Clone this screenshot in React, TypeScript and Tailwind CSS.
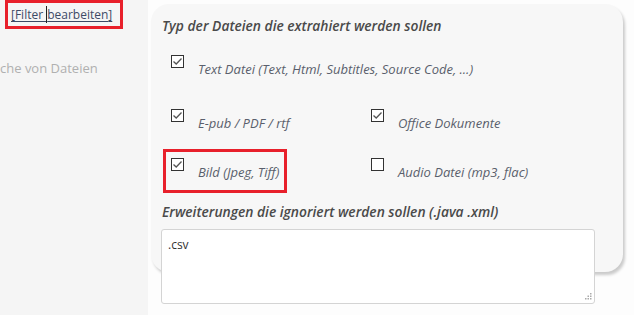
import React from "react"

type Opt = { label: string; checked: boolean; marked?: boolean }

const rows: Opt[][] = [
    [{ label: "Text Datei (Text, Html, Subtitles, Source Code, ...)", checked: true }],
    [
        { label: "E-pub / PDF / rtf", checked: true },
        { label: "Office Dokumente", checked: true },
    ],
    [
        { label: "Bild (Jpeg, Tiff)", checked: true, marked: true },
        { label: "Audio Datei (mp3, flac)", checked: false },
    ],
]

const rowGap = ["mt-0", "mt-[31px]", "mt-[26px]"]

const Box = ({ checked }: { checked: boolean }) => (
    <span className="flex items-center justify-center w-[13px] h-[13px] shrink-0 border border-[#333] bg-white">
        {checked && (
            <svg width="11" height="11" viewBox="0 0 11 11" fill="none">
                <path d="M1.5 5.5 L4.2 8 L9.5 2.5" stroke="#555" strokeWidth="1.3" />
            </svg>
        )}
    </span>
)

const Option = ({ opt }: { opt: Opt }) => (
    <div className="relative flex flex-row items-start w-[200px]">
        {opt.marked && (
            <div className="absolute left-[-8px] top-[-9px] w-[124px] h-[44px] border-[3px] border-[#e8202b]" />
        )}
        <Box checked={opt.checked} />
        <span className="ml-[14px] mt-[5px] text-[13px] leading-[18px] italic text-[#5a5f6c] whitespace-nowrap">
            {opt.label}
        </span>
    </div>
)

export default function App() {
    return (
        <div className="flex flex-row w-[634px] h-[315px] overflow-hidden bg-[#fdfdfd]" style={{ fontFamily: "'Open Sans', sans-serif" }}>
            <aside className="flex flex-col w-[148px] shrink-0 bg-[#f5f5f5]">
                <div className="ml-[5px] w-[118px] h-[29px] border-[3px] border-[#e8202b] flex items-center pl-[3px]">
                    <span className="text-[12px] text-[#3d4a66] underline underline-offset-2 whitespace-nowrap">
                        [Filter <span className="border-l border-[#222]">bearbeiten</span>]
                    </span>
                </div>
                <span className="mt-[30px] text-[13px] text-[#b0b0b0] whitespace-nowrap">che von Dateien</span>
            </aside>
            <main className="pl-[3px] pt-[4px]">
                <section className="flex flex-col w-[472px] h-[268px] bg-[#f7f7f7] rounded-[18px] shadow-[2px_3px_3px_rgba(0,0,0,0.2)] pl-[11px] pt-[13px]">
                    <h3 className="text-[13.8px] leading-[18px] font-semibold italic text-[#4a4a4a] whitespace-nowrap">
                        Typ der Dateien die extrahiert werden sollen
                    </h3>
                    <div className="flex flex-col mt-[20px] ml-[9px]">
                        {rows.map((r, i) => (
                            <div key={i} className={"flex flex-row " + rowGap[i]}>
                                {r.map((o) => (
                                    <Option key={o.label} opt={o} />
                                ))}
                            </div>
                        ))}
                    </div>
                    <h3 className="mt-[22px] text-[13.8px] leading-[18px] font-semibold italic text-[#4a4a4a] whitespace-nowrap">
                        Erweiterungen die ignoriert werden sollen (.java .xml)
                    </h3>
                    <div className="relative mt-[8px] ml-[-1px] w-[434px] h-[75px] shrink-0">
                        <textarea
                            defaultValue=".csv"
                            className="w-full h-full bg-white border border-[#d4d4d4] rounded-[3px] px-[6px] py-[6px] text-[12px] text-[#333] resize-none outline-none"
                        />
                        <svg className="absolute right-[3px] bottom-[4px]" width="7" height="7" viewBox="0 0 7 7" fill="#aaa">
                            <rect x="5" y="0" width="1.5" height="1.5" />
                            <rect x="2.5" y="2.5" width="1.5" height="1.5" />
                            <rect x="5" y="2.5" width="1.5" height="1.5" />
                            <rect x="0" y="5" width="1.5" height="1.5" />
                            <rect x="2.5" y="5" width="1.5" height="1.5" />
                            <rect x="5" y="5" width="1.5" height="1.5" />
                        </svg>
                    </div>
                </section>
            </main>
        </div>
    )
}
